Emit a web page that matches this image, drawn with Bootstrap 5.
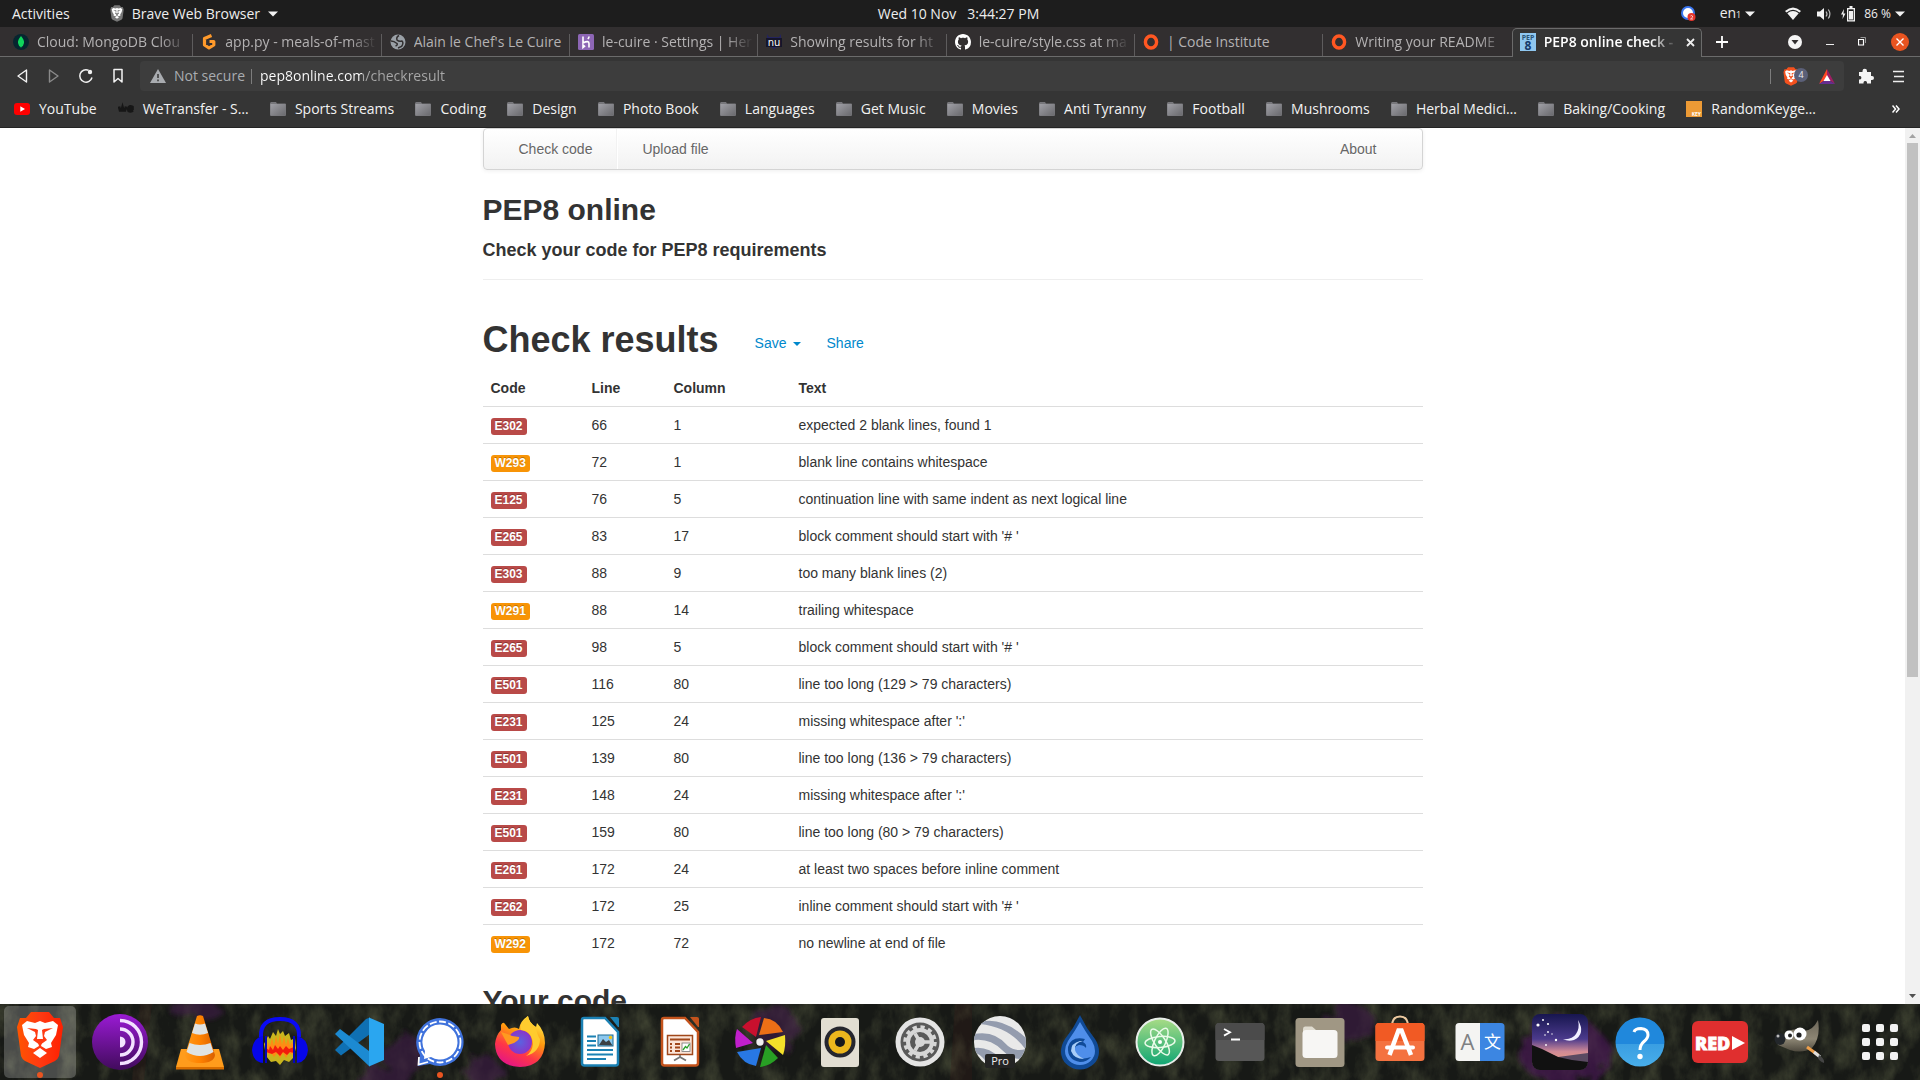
<!DOCTYPE html>
<html lang="en">
<head>
<meta charset="utf-8">
<meta name="viewport" content="width=device-width, initial-scale=1">
<title>PEP8 online check</title>
<link href="https://cdn.jsdelivr.net/npm/bootstrap@5.3.0/dist/css/bootstrap.min.css" rel="stylesheet">
<style>
  body { height: 100vh; overflow: hidden; font-family: "Open Sans", "Noto Sans", sans-serif; font-size: 14px; line-height: 20px; color: #eee; background: #fff; }
  button { border: 0; background: none; color: inherit; padding: 0; display: inline-flex; align-items: center; justify-content: center; }
  svg { display: block; flex: none; }
  .topbar { height: 27px; background: #1d1d1d; padding: 0 15px 0 12px; }
  .topbar-side { flex: 1 1 0; }
  .app-menu { margin-left: 40px; }
  .layout-index { font-size: 9px; }
  .battery-level { font-size: 12px; }
  .tray-state { margin-left: 30px; }

  .tabstrip { height: 30px; background: #322f30; padding-left: 5px; }
  .tab-item { flex: 1 1 0; min-width: 0; height: 30px; gap: 8px; padding: 0 5px 0 8px; justify-content: flex-start; color: #b4b2b3; border-bottom: 1px solid #6b6b6b; position: relative; }
  .tab-item::after { content: ""; position: absolute; right: 0; top: 7px; bottom: 0; width: 1px; background: #5e5c5d; }
  .tab-label { flex: 1 1 0; min-width: 0; overflow: hidden; white-space: nowrap; text-align: left; -webkit-mask-image: linear-gradient(90deg, #000 calc(100% - 28px), transparent); mask-image: linear-gradient(90deg, #000 calc(100% - 28px), transparent); }
  .tab-label.short { -webkit-mask-image: none; mask-image: none; }
  .tab-item.current { margin-top: 1px; height: 29px; background: #353535; color: #fff; border: 1px solid #6b6b6b; border-bottom: 0; border-radius: 5px 5px 0 0; padding: 0 6px 2px 7px; font-weight: 600; }
  .tab-item.current::after, .tab-item.last-idle::after { display: none; }
  .strip-end { width: 218px; gap: 24px; border-bottom: 1px solid #6b6b6b; padding: 0 11px 0 14px; }
  .strip-start { width: 5px; margin-left: -5px; border-bottom: 1px solid #6b6b6b; }

  .toolbar { height: 34px; background: #353535; padding: 4px 16px 0 14px; }
  .nav-tools { width: 126px; gap: 16px; }
  .address { height: 30px; background: #3d3d3d; border-radius: 4px; padding: 0 9px 0 10px; color: #a9acb0; }
  .address label { margin: 0 6px 0 8px; }
  .address input { border: 0; outline: 0; padding: 0; margin-left: 8px; color: transparent; background: linear-gradient(90deg, #fff 102px, #a9a9a9 102px); -webkit-background-clip: text; background-clip: text; }
  .v-rule { width: 1px; height: 15px; background: #7d7d7d; }
  .ext-tools { width: 60px; padding-left: 14px; }
  .shield-count { position: absolute; left: 11px; top: 1px; width: 14px; height: 14px; border-radius: 7px; background: #5b6078; color: #eee; font-size: 9px; line-height: 14px; text-align: center; }

  .bookmarks { height: 37px; background: #353535; padding: 0 20px 1px 14px; border-bottom: 1px solid #242424; }
  .bookmarks a { color: #f2f2f2; text-decoration: none; gap: 9px; white-space: nowrap; }
  .bookmark-list { padding-right: 76px; }

  .page { flex: 1 1 0; font-family: "Liberation Sans", Arial, sans-serif; color: #333; min-height: 0; }
  .page-body { overflow: hidden; height: 100%; }
  .site { max-width: 940px; margin: 0 auto; }
  .site-nav { border: 1px solid #d4d4d4; border-radius: 4px; background: linear-gradient(#fff, #f2f2f2); box-shadow: 0 1px 4px rgba(0,0,0,.065); padding: 0 30px 0 20px; }
  .site-nav a { color: #666; text-decoration: none; padding: 10px 15px; text-shadow: 0 1px 0 #fff; }
  .site-nav-rule { width: 2px; height: 40px; margin: 0 9px; border-left: 1px solid #f2f2f2; border-right: 1px solid #fff; }
  .site h1, .site h2, .site h3 { font-weight: 700; margin: 10px 0; color: #333; }
  .site h1 { font-size: 36px; line-height: 40px; }
  .site h2 { font-size: 30px; line-height: 40px; }
  .site h3 { font-size: 18px; line-height: 20px; }
  .site-head { margin: 20px 0 40px; padding-bottom: 19px; border-bottom: 1px solid #eee; }
  .site-head h2, .site-head h3 { margin: 0 0 10px; }
  .site-head h3 { margin-bottom: 0; }
  .result-links { padding: 13px 0 0 36px; gap: 26px; }
  .result-links a { color: #08c; text-decoration: none; }
  .result-links .dropdown-toggle::after { border-top-width: 4px; border-left-width: 4px; border-right-width: 4px; margin-left: 6px; vertical-align: 2px; }
  .results { --bs-table-color: #333; --bs-table-bg: transparent; margin-bottom: 20px; table-layout: fixed; color: #333; }
  .results > :not(caption) > * > * { padding: 8px; border: 0; line-height: 20px; }
  .results > tbody > tr > td { border-top: 1px solid #ddd; }
  .c-code { width: 101px; } .c-line { width: 82px; } .c-col { width: 125px; }
  .code-tag { display: inline-block; vertical-align: top; margin-top: 3px; font-size: 12px; line-height: 14px; padding: 1px 4px 2px; border-radius: 3px; font-weight: 700; color: #fff; text-shadow: 0 -1px 0 rgba(0,0,0,.25); }
  .tag-e { background: #b94a48; } .tag-w { background: #f89406; }

  .scroller { width: 15px; background: #f1f1f1; }
  .scroll-arrow { height: 15px; width: 15px; }
  .scroll-thumb { width: 11px; height: 61%; background: #c1c1c1; }

  .dock { height: 76px; background: #181a16; position: relative; overflow: hidden; }
  .dock-bg { position: absolute; inset: 0; width: 100%; height: 100%; }
  .dock-app { flex: 1 1 0; height: 76px; position: relative; }
  .dock-app.active::before { content: ""; position: absolute; inset: 2px 4px; border-radius: 5px; background: rgba(255,255,255,.22); }
  .dock-app svg { position: relative; }
  .dock-app.running::after { content: ""; position: absolute; left: calc(50% - 3px); bottom: 2px; width: 6px; height: 6px; border-radius: 3px; background: #e95420; }
  .shield-grey { --shield: #777; }
  .shield-flat { --shield: #f4511e; }
</style>
<script src="https://cdn.jsdelivr.net/npm/bootstrap@5.3.0/dist/js/bootstrap.bundle.min.js"></script>
</head>
<body class="d-flex flex-column">

<svg width="0" height="0" class="position-absolute" aria-hidden="true">
  <defs>
    <linearGradient id="gFolder" x1="0" y1="0" x2="1" y2="1"><stop offset="0" stop-color="#a0a0a6"/><stop offset="1" stop-color="#69696d"/></linearGradient>
    <linearGradient id="gBrave" x1="0" x2="1"><stop offset="0" stop-color="#ff5500"/><stop offset=".5" stop-color="#ff3a12"/><stop offset="1" stop-color="#ff2000"/></linearGradient>
    <linearGradient id="gTor" x1="0" y1="0" x2="0" y2="1"><stop offset="0" stop-color="#9a1bd4"/><stop offset="1" stop-color="#410b5c"/></linearGradient>
    <linearGradient id="gCone" x1="0" x2="1"><stop offset="0" stop-color="#ff9a1a"/><stop offset=".5" stop-color="#ff8200"/><stop offset="1" stop-color="#d95f00"/></linearGradient>
    <linearGradient id="gFox" x1=".8" y1="0" x2=".3" y2="1"><stop offset="0" stop-color="#fff44f"/><stop offset=".4" stop-color="#ff980e"/><stop offset=".7" stop-color="#ff3647"/><stop offset="1" stop-color="#e31587"/></linearGradient>
    <linearGradient id="gAtom" x1="0" y1="0" x2="0" y2="1"><stop offset="0" stop-color="#a9dc86"/><stop offset="1" stop-color="#0fa573"/></linearGradient>
    <linearGradient id="gSky" x1="0" y1="0" x2="0" y2="1"><stop offset="0" stop-color="#17164f"/><stop offset=".5" stop-color="#4b3a8c"/><stop offset=".75" stop-color="#d08a96"/><stop offset="1" stop-color="#f0a080"/></linearGradient>
    <linearGradient id="gHelp" x1="0" y1="0" x2="0" y2="1"><stop offset=".54" stop-color="#2088dc"/><stop offset=".55" stop-color="#3a9ee2"/><stop offset="1" stop-color="#48aeea"/></linearGradient>
    <linearGradient id="gGimp" x1="0" y1="0" x2="0" y2="1"><stop offset="0" stop-color="#6b6558"/><stop offset=".6" stop-color="#8d8674"/><stop offset="1" stop-color="#4e493e"/></linearGradient>
    <radialGradient id="gOrb"><stop offset="0" stop-color="#5a63e0"/><stop offset="1" stop-color="#8a35c8"/></radialGradient>
    <symbol id="folder" viewBox="0 0 16 16"><path d="M0 2.5Q0 1 1.2 1H6L7 2.5H15Q16 2.5 16 3.5V13.5Q16 15 14.8 15H1.2Q0 15 0 13.5Z" fill="#77777b"/><path d="M.5 3H15.5V14.5H.5Z" fill="url(#gFolder)"/></symbol>
    <symbol id="lion" viewBox="6 1 48 58"><path d="M21 2H39L44 8L50 8L53 17L49 46Q48 49 45 51L30 58L15 51Q12 49 11 46L7 17L10 8L16 8Z" fill="var(--shield,url(#gBrave))"/><path d="M12 15L17 11L25 13L30 11L35 13L43 11L48 15L46 25L41 33L42 37L36 39L31 36L33 29H27L29 36L24 39L18 37L19 33L14 25Z" fill="#fff"/><path d="M23 43L30 38L37 43L30 48Z" fill="#fff"/><path d="M17 18L26 19L28 20L27 29L30 31L33 29L32 20L34 19L43 18L35 22L34 26L37 30L30 35L23 30L26 26L25 22Z" fill="var(--shield,#ff3a12)"/></symbol>
    <symbol id="ring" viewBox="0 0 16 16"><ellipse cx="8" cy="8" rx="5.6" ry="6" fill="none" stroke="#ff5722" stroke-width="3.4"/></symbol>
    <symbol id="caret" viewBox="0 0 10 6"><path d="M0 .5H10L5 5.5Z" fill="#f2f2f2"/></symbol>
  </defs>
</svg>

<header class="topbar d-flex align-items-center flex-shrink-0">
  <div class="topbar-side d-flex align-items-center">
    <button type="button">Activities</button>
    <button type="button" class="app-menu"><svg width="14" height="17" class="shield-grey"><use href="#lion"/></svg><span class="ms-2 me-2">Brave Web Browser</span><svg width="10" height="6"><use href="#caret"/></svg></button>
  </div>
  <button type="button">Wed 10 Nov&nbsp;&nbsp; 3:44:27 PM</button>
  <div class="topbar-side d-flex align-items-center justify-content-end">
    <svg width="15" height="16" viewBox="0 0 15 16"><circle cx="7" cy="7" r="6" fill="#fff" stroke="#3a76f0" stroke-width="2"/><circle cx="10.5" cy="11" r="4" fill="#e5352d"/><path d="M9.5 10q1-1 2 0T9.5 13h2.5" fill="none" stroke="#fff" stroke-width=".7"/></svg>
    <button type="button" class="ms-4"><span>en<span class="layout-index">1</span></span><svg width="10" height="6" class="ms-1"><use href="#caret"/></svg></button>
    <button type="button" class="tray-state">
      <svg width="16" height="14" viewBox="0 0 16 14"><path d="M0 4Q8-3 16 4L14.5 5.6Q8 0 1.5 5.6Z" fill="#f2f2f2"/><path d="M2.3 6.3Q8 1.8 13.7 6.3L8 13Z" fill="#f2f2f2"/></svg>
      <svg width="16" height="14" viewBox="0 0 16 14" class="ms-3"><path d="M0 4.500H3L7 1V13L3 9.500H0Z" fill="#f2f2f2"/><path d="M9 4.5Q11 7 9 9.500M11.3 2.500Q14.5 7 11.3 11.500" stroke="#bbb" fill="none" stroke-width="1.2"/></svg>
      <svg width="15" height="16" viewBox="0 0 15 16" class="ms-2 me-2"><path d="M3 3L0 8.5H2L1.5 13L4.500 7.5H2.5Z" fill="#f2f2f2"/><path d="M8.5 0H11.5V2H8.5ZM6 2H14V15.5H6Z" fill="#f2f2f2"/><path d="M7.3 3.3H12.7V14.2H7.3Z" fill="#1d1d1d"/><path d="M8 5H12V13.5H8Z" fill="#f2f2f2"/></svg>
      <span class="battery-level me-1">86 %</span><svg width="10" height="6"><use href="#caret"/></svg>
    </button>
  </div>
</header>

<nav class="tabstrip d-flex flex-shrink-0" aria-label="Browser tabs">
  <div class="strip-start"></div>
  <button type="button" class="tab-item"><svg width="16" height="16" viewBox="0 0 16 16"><circle cx="8" cy="8" r="8" fill="#06262f"/><path d="M8 2Q4.5 6 5 9Q5.5 12 7.7 13L8 14.5L8.3 13Q10.5 12 11 9Q11.5 6 8 2Z" fill="#10d65c"/></svg><span class="tab-label">Cloud: MongoDB Clou</span></button>
  <button type="button" class="tab-item"><svg width="16" height="16" viewBox="0 0 16 16"><path d="M10.500 1.500L3.500 4.500V11L8 14L12.800 11V7.500H8.500" fill="none" stroke="#ff9a2b" stroke-width="3.200" stroke-linejoin="round"/></svg><span class="tab-label">app.py - meals-of-mast</span></button>
  <button type="button" class="tab-item"><svg width="16" height="16" viewBox="0 0 16 16"><circle cx="8" cy="8" r="7.5" fill="#9aa0a6"/><path d="M9 1.5Q6 3 7 6Q9 8 12 7Q14 9 11.5 12.5L8 14M1 7Q4 7 7 9.5Q8 11 5.5 12" fill="none" stroke="#322f30" stroke-width="1.5"/></svg><span class="tab-label short">Alain le Chef's Le Cuire</span></button>
  <button type="button" class="tab-item"><svg width="16" height="16" viewBox="0 0 16 16"><rect width="16" height="16" rx="1.5" fill="#8d66b5"/><path d="M5 2.5V9Q11 6 11 9.5V13.5M5 11V13.5L6.5 12.2ZM11 2.5Q11 4 9.8 5" fill="none" stroke="#fff" stroke-width="1.6"/></svg><span class="tab-label">le-cuire · Settings | Her</span></button>
  <button type="button" class="tab-item"><svg width="16" height="16" viewBox="0 0 16 16"><path d="M1 0L3 3H13L15 0V12L9 14L8 16L7 14L1 12Z" fill="#24245e"/><rect y="4" width="16" height="9" fill="#15152a"/><text x="8" y="11.5" font-size="10" text-anchor="middle" fill="#fff" font-family="DejaVu Sans">nu</text></svg><span class="tab-label">Showing results for ht</span></button>
  <button type="button" class="tab-item"><svg width="16" height="16" viewBox="0 0 16 16"><path fill="#fff" d="M8 0C3.58 0 0 3.58 0 8c0 3.54 2.29 6.53 5.47 7.59.4.07.55-.17.55-.38 0-.19-.01-.82-.01-1.49-2.01.37-2.53-.49-2.69-.94-.09-.23-.48-.94-.82-1.13-.28-.15-.68-.52-.01-.53.63-.01 1.08.58 1.23.82.72 1.21 1.87.87 2.33.66.07-.52.28-.87.51-1.07-1.78-.2-3.64-.89-3.64-3.95 0-.87.31-1.59.82-2.15-.08-.2-.36-1.02.08-2.12 0 0 .67-.21 2.2.82.64-.18 1.32-.27 2-.27s1.36.09 2 .27c1.53-1.04 2.2-.82 2.2-.82.44 1.1.16 1.92.08 2.12.51.56.82 1.27.82 2.15 0 3.07-1.87 3.75-3.65 3.95.29.25.54.73.54 1.48 0 1.07-.01 1.93-.01 2.2 0 .21.15.46.55.38A8 8 0 0 0 16 8c0-4.42-3.58-8-8-8"/></svg><span class="tab-label">le-cuire/style.css at ma</span></button>
  <button type="button" class="tab-item"><svg width="16" height="16"><use href="#ring"/></svg><span class="tab-label short">| Code Institute</span></button>
  <button type="button" class="tab-item last-idle"><svg width="16" height="16"><use href="#ring"/></svg><span class="tab-label">Writing your README</span></button>
  <button type="button" class="tab-item current"><svg width="16" height="18" viewBox="0 0 16 18"><rect width="16" height="18" fill="#8fc7f0"/><text x="8" y="7" font-size="7" font-weight="700" text-anchor="middle" fill="#2b5476">PEP</text><text x="8" y="17" font-size="12" font-weight="700" text-anchor="middle" fill="#163a6b">8</text></svg><span class="tab-label">PEP8 online check -</span><svg width="9" height="9" viewBox="0 0 9 9"><path d="M1 1L8 8M8 1L1 8" stroke="#eee" stroke-width="1.8"/></svg></button>
  <div class="strip-end d-flex align-items-center">
    <button type="button" aria-label="New tab" class="me-auto"><svg width="12" height="12" viewBox="0 0 12 12"><path d="M6 0V12M0 6H12" stroke="#fff" stroke-width="1.8"/></svg></button>
    <button type="button" aria-label="Search tabs"><svg width="14" height="14" viewBox="0 0 14 14"><circle cx="7" cy="7" r="7" fill="#f5f5f5"/><path d="M3.5 5H10.5L7 9.5Z" fill="#322f30"/></svg></button>
    <button type="button" aria-label="Minimise"><svg width="8" height="9" viewBox="0 0 8 9"><path d="M0 7.5H8" stroke="#eee"/></svg></button>
    <button type="button" aria-label="Restore"><svg width="9" height="9" viewBox="0 0 9 9"><path d="M.5 2.5H5.5V8H.5Z" fill="none" stroke="#fff" stroke-width="1.2"/><path d="M2.5 .5H7.5V6" fill="none" stroke="#999"/></svg></button>
    <button type="button" aria-label="Close"><svg width="18" height="18" viewBox="0 0 18 18"><circle cx="9" cy="9" r="9" fill="#e95420"/><path d="M5.5 5.5L12.5 12.5M12.5 5.5L5.5 12.5" stroke="#fff" stroke-width="1.4"/></svg></button>
  </div>
</nav>

<div class="toolbar d-flex align-items-center flex-shrink-0">
  <div class="nav-tools d-flex">
    <button type="button" aria-label="Back"><svg width="16" height="16" viewBox="0 0 16 16"><path d="M12.5 2L4 8L12.5 14Z" fill="none" stroke="#f2f2f2" stroke-width="1.4" stroke-linejoin="round"/></svg></button>
    <button type="button" aria-label="Forward"><svg width="16" height="16" viewBox="0 0 16 16"><path d="M3.5 2L12 8L3.5 14Z" fill="none" stroke="#8a8a8a" stroke-width="1.4" stroke-linejoin="round"/></svg></button>
    <button type="button" aria-label="Reload"><svg width="16" height="16" viewBox="0 0 16 16"><path d="M14 9.500A6.200 6.200 0 1 1 10.500 2.300" fill="none" stroke="#f2f2f2" stroke-width="1.5"/><circle cx="12" cy="4" r="2.200" fill="#f2f2f2"/></svg></button>
    <button type="button" aria-label="Bookmark"><svg width="16" height="16" viewBox="0 0 16 16"><path d="M4 1.5H12V14L8 10.5L4 14Z" fill="none" stroke="#f2f2f2" stroke-width="1.5" stroke-linejoin="round"/></svg></button>
  </div>
  <div class="address d-flex flex-fill align-items-center">
    <svg width="16" height="14" viewBox="0 0 16 14"><path d="M8 0L16 14H0Z" fill="#a9acb0"/><path d="M8 5V9M8 10.5V12.3" stroke="#3d3d3d" stroke-width="1.6"/></svg>
    <label for="url">Not secure</label>
    <span class="v-rule"></span>
    <input id="url" class="flex-fill" type="text" value="pep8online.com/checkresult" spellcheck="false">
    <span class="v-rule"></span>
    <button type="button" class="position-relative mx-2 px-1" aria-label="Brave shields"><svg width="16" height="19" class="shield-flat"><use href="#lion"/></svg><span class="shield-count ms-1">4</span></button>
    <button type="button" class="ms-2" aria-label="Rewards"><svg width="16" height="15" viewBox="0 0 16 15"><path d="M8 0L0 15L8 9.5Z" fill="#ff4724"/><path d="M8 0L16 15L8 9.5Z" fill="#9e1f63"/><path d="M0 15H16L8 10Z" fill="#662d91"/><path d="M8 6L11.5 12H4.5Z" fill="#fff"/></svg></button>
  </div>
  <div class="ext-tools d-flex align-items-center justify-content-between">
    <button type="button" aria-label="Extensions"><svg width="16" height="16" viewBox="0 0 16 16"><path d="M1 4H4.5V3A2.200 2.200 0 0 1 9 3V4H13V8H14A2 2 0 0 1 14 12H13V15.5H9V14.5A1.8 1.8 0 0 0 5.5 14.5V15.5H1V11.5H2A1.8 1.8 0 0 0 2 8H1Z" fill="#f5f5f5"/></svg></button>
    <button type="button" aria-label="Menu"><svg width="11" height="13" viewBox="0 0 11 13"><path d="M0 1.500H11M1 6.500H11M0 11.500H11" stroke="#eee" stroke-width="1.6"/></svg></button>
  </div>
</div>

<nav class="bookmarks d-flex align-items-center flex-shrink-0" aria-label="Bookmarks">
  <div class="bookmark-list d-flex flex-fill justify-content-between">
    <a href="#" class="d-flex align-items-center"><svg width="16" height="16" viewBox="0 0 16 16"><rect y="2" width="16" height="12" rx="3" fill="#f00"/><path d="M6.3 5.3L11 8L6.3 10.7Z" fill="#fff"/></svg>YouTube</a>
    <a href="#" class="d-flex align-items-center"><svg width="16" height="16" viewBox="0 0 16 16"><path d="M1 5.500L2 9.500H3.500L4.500 6L5.500 9.500H7L8 5.500M15 9.500Q10.500 12 10 8Q11 4 14.500 6V8H10.500" fill="none" stroke="#161616" stroke-width="2.600"/></svg>WeTransfer - S…</a>
    <a href="#" class="d-flex align-items-center"><svg width="16" height="16"><use href="#folder"/></svg>Sports Streams</a>
    <a href="#" class="d-flex align-items-center"><svg width="16" height="16"><use href="#folder"/></svg>Coding</a>
    <a href="#" class="d-flex align-items-center"><svg width="16" height="16"><use href="#folder"/></svg>Design</a>
    <a href="#" class="d-flex align-items-center"><svg width="16" height="16"><use href="#folder"/></svg>Photo Book</a>
    <a href="#" class="d-flex align-items-center"><svg width="16" height="16"><use href="#folder"/></svg>Languages</a>
    <a href="#" class="d-flex align-items-center"><svg width="16" height="16"><use href="#folder"/></svg>Get Music</a>
    <a href="#" class="d-flex align-items-center"><svg width="16" height="16"><use href="#folder"/></svg>Movies</a>
    <a href="#" class="d-flex align-items-center"><svg width="16" height="16"><use href="#folder"/></svg>Anti Tyranny</a>
    <a href="#" class="d-flex align-items-center"><svg width="16" height="16"><use href="#folder"/></svg>Football</a>
    <a href="#" class="d-flex align-items-center"><svg width="16" height="16"><use href="#folder"/></svg>Mushrooms</a>
    <a href="#" class="d-flex align-items-center"><svg width="16" height="16"><use href="#folder"/></svg>Herbal Medici…</a>
    <a href="#" class="d-flex align-items-center"><svg width="16" height="16"><use href="#folder"/></svg>Baking/Cooking</a>
    <a href="#" class="d-flex align-items-center"><svg width="16" height="16" viewBox="0 0 16 16"><rect width="16" height="16" fill="#ec9a35"/><text x="15" y="14.5" font-size="5" font-weight="700" text-anchor="end" fill="#fff">KEY</text></svg>RandomKeyge…</a>
  </div>
  <button type="button" aria-label="More bookmarks"><svg width="8" height="8" viewBox="0 0 8 8"><path d="M.5 .5L3.5 4L.5 7.5M4 .5L7 4L4 7.5" fill="none" stroke="#fff" stroke-width="1.5"/></svg></button>
</nav>

<main class="page d-flex">
  <div class="page-body flex-fill">
    <div class="site">
      <nav class="site-nav d-flex align-items-center" aria-label="Site">
        <a href="#">Check code</a><span class="site-nav-rule"></span><a href="#">Upload file</a><a href="#" class="ms-auto">About</a>
      </nav>
      <div class="site-head">
        <h2>PEP8 online</h2>
        <h3>Check your code for PEP8 requirements</h3>
      </div>
      <div class="d-flex">
        <h1 class="mt-0">Check results</h1>
        <div class="result-links d-flex"><a href="#" class="dropdown-toggle">Save</a><a href="#">Share</a></div>
      </div>
      <table class="table results">
        <thead><tr><th class="c-code">Code</th><th class="c-line">Line</th><th class="c-col">Column</th><th>Text</th></tr></thead>
        <tbody>
          <tr><td><span class="code-tag tag-e">E302</span></td><td>66</td><td>1</td><td>expected 2 blank lines, found 1</td></tr>
          <tr><td><span class="code-tag tag-w">W293</span></td><td>72</td><td>1</td><td>blank line contains whitespace</td></tr>
          <tr><td><span class="code-tag tag-e">E125</span></td><td>76</td><td>5</td><td>continuation line with same indent as next logical line</td></tr>
          <tr><td><span class="code-tag tag-e">E265</span></td><td>83</td><td>17</td><td>block comment should start with '# '</td></tr>
          <tr><td><span class="code-tag tag-e">E303</span></td><td>88</td><td>9</td><td>too many blank lines (2)</td></tr>
          <tr><td><span class="code-tag tag-w">W291</span></td><td>88</td><td>14</td><td>trailing whitespace</td></tr>
          <tr><td><span class="code-tag tag-e">E265</span></td><td>98</td><td>5</td><td>block comment should start with '# '</td></tr>
          <tr><td><span class="code-tag tag-e">E501</span></td><td>116</td><td>80</td><td>line too long (129 &gt; 79 characters)</td></tr>
          <tr><td><span class="code-tag tag-e">E231</span></td><td>125</td><td>24</td><td>missing whitespace after ':'</td></tr>
          <tr><td><span class="code-tag tag-e">E501</span></td><td>139</td><td>80</td><td>line too long (136 &gt; 79 characters)</td></tr>
          <tr><td><span class="code-tag tag-e">E231</span></td><td>148</td><td>24</td><td>missing whitespace after ':'</td></tr>
          <tr><td><span class="code-tag tag-e">E501</span></td><td>159</td><td>80</td><td>line too long (80 &gt; 79 characters)</td></tr>
          <tr><td><span class="code-tag tag-e">E261</span></td><td>172</td><td>24</td><td>at least two spaces before inline comment</td></tr>
          <tr><td><span class="code-tag tag-e">E262</span></td><td>172</td><td>25</td><td>inline comment should start with '# '</td></tr>
          <tr><td><span class="code-tag tag-w">W292</span></td><td>172</td><td>72</td><td>no newline at end of file</td></tr>
        </tbody>
      </table>
      <h2>Your code</h2>
    </div>
  </div>
  <div class="scroller d-flex flex-column align-items-center">
    <svg class="scroll-arrow" viewBox="0 0 15 15"><path d="M4 10L7.5 6L11 10Z" fill="#a3a3a3"/></svg>
    <div class="scroll-thumb"></div>
    <svg class="scroll-arrow mt-auto" viewBox="0 0 15 15"><path d="M4 5L7.5 9L11 5Z" fill="#505050"/></svg>
  </div>
</main>

<footer class="dock d-flex flex-shrink-0">
  <svg class="dock-bg" viewBox="0 0 1920 76" preserveAspectRatio="none" aria-hidden="true">
    <defs>
      <filter id="fGrass" x="0" y="0" width="100%" height="100%"><feTurbulence type="fractalNoise" baseFrequency=".05 .03" numOctaves="5" seed="4"/><feColorMatrix values="0 0 0 0 .19  0 0 0 0 .21  0 0 0 0 .1  1.6 0 0 0 -.62"/></filter>
      <filter id="fSoft"><feTurbulence type="fractalNoise" baseFrequency=".06" numOctaves="3" seed="9" result="n"/><feDisplacementMap in="SourceGraphic" in2="n" scale="24"/><feGaussianBlur stdDeviation="2"/></filter>
    </defs>
    <rect width="1920" height="76" fill="#171916"/>
    <rect width="1920" height="76" filter="url(#fGrass)" opacity=".5"/>
    <g filter="url(#fSoft)" fill="#3c1a44" opacity=".65">
      <ellipse cx="195" cy="6" rx="26" ry="9"/><ellipse cx="405" cy="50" rx="24" ry="18"/><ellipse cx="385" cy="74" rx="28" ry="10"/><ellipse cx="484" cy="68" rx="18" ry="15"/><ellipse cx="775" cy="22" rx="22" ry="22"/><ellipse cx="1350" cy="18" rx="22" ry="20"/><ellipse cx="1564" cy="48" rx="44" ry="34" fill="#4a1256"/>
    </g>
    <g fill="#3a1a18" opacity=".25"><path d="M955 0H972V76H950Z"/><path d="M140 0H152L144 76H132Z"/></g>
  </svg>

  <button type="button" class="dock-app active running" aria-label="Brave"><svg width="48" height="58" class="mb-1"><use href="#lion"/></svg></button>

  <button type="button" class="dock-app" aria-label="Tor Browser"><svg width="60" height="60" viewBox="0 0 60 60"><circle cx="30" cy="30" r="28" fill="url(#gTor)"/><path d="M30 24.5A5.5 5.5 0 0 1 30 35.5Z" fill="#f3e2ff"/><path d="M30 17A13 13 0 0 1 30 43M30 8.5A21.5 21.5 0 0 1 30 51.5" fill="none" stroke="#f3e2ff" stroke-width="3.4"/></svg></button>

  <button type="button" class="dock-app" aria-label="VLC"><svg width="60" height="60" viewBox="0 0 60 60"><path d="M11 37H49L54 55V57H6V55Z" fill="#ff9c1c"/><path d="M6 55H54V57.5H6Z" fill="#d96f00"/><path d="M27 4Q30 2.5 33 4L45 43Q44 51 30 51Q16 51 15 43Z" fill="url(#gCone)"/><path d="M25 11.5Q30 13.5 35 11.5L38 21Q30 24.5 22 21ZM19.5 31Q30 35 40.5 31L43.5 40Q30 48 16.5 40Z" fill="#dfe3e4"/></svg></button>

  <button type="button" class="dock-app" aria-label="Audacity"><svg width="60" height="60" viewBox="0 0 60 60"><path d="M16 44L14 32L18 24L20 27L23 20L26 24L28 17L30 22L33 19L35 24L39 21L41 28L45 26L46 36L43 46L39 50L34 48L30 53L26 49L21 50Z" fill="#c9b51e"/><path d="M17 38L18 30L20 34L22 26L24 34L26 24L28 32L30 22L32 33L34 24L36 33L38 26L40 34L42 29L44 38L42 43L39 40L36 46L33 41L30 46L27 41L24 45L21 41L19 43Z" fill="#ff8b14"/><path d="M16 36L19 38L20 34L23 38L25 33L28 37L30 34L33 38L36 34L39 37L44 35V41L40 40L37 43L33 40L30 44L26 40L22 42L16 40Z" fill="#f21c0c"/><path d="M11 25Q10 7 30 7Q50 7 49 25" fill="none" stroke="#0a0af5" stroke-width="4"/><path d="M13 24V51Q3 50 2 38Q3 26 13 24ZM47 24V51Q57 50 58 38Q57 26 47 24Z" fill="#0606e8"/><path d="M16 24V51M44 24V51" stroke="#0606b8" stroke-width="2"/></svg></button>

  <button type="button" class="dock-app" aria-label="Visual Studio Code"><svg width="60" height="60" viewBox="0 0 60 60"><path d="M5 38L36 7L40 5.500V22L11 43.500Z" fill="#0f70b3"/><path d="M10 17L39 39V54L5 22Z" fill="#1c8ad2"/><path d="M39 5.5L54 12V48L39 54.500Z" fill="#2aa6f0"/></svg></button>

  <button type="button" class="dock-app running" aria-label="Signal"><svg width="60" height="60" viewBox="0 0 60 60"><path d="M30 6A24 24 0 1 1 20 52L8 54L10 43A24 24 0 0 1 30 6Z" fill="#3f72dc"/><circle cx="30" cy="30" r="20.5" fill="none" stroke="#fff" stroke-width="1.8" stroke-dasharray="7 2.5"/><path d="M9 45L8.5 52.5L18 50" fill="none" stroke="#fff" stroke-width="1.8"/><path d="M30 12.500A17.500 17.500 0 1 1 21 45L14 47L15 39A17.500 17.500 0 0 1 30 12.500Z" fill="#fff"/></svg></button>

  <button type="button" class="dock-app" aria-label="Firefox"><svg width="60" height="60" viewBox="0 0 60 60"><path d="M11 13Q13 9 15 12L19 17Q25 14 29 17Q30 9 38 4Q39 11 46 15L47 11Q55 19 55 31Q54 54 30 55Q6 54 5 32Q6 23 11 18Z" fill="url(#gFox)"/><circle cx="30" cy="30" r="12" fill="url(#gOrb)"/><path d="M38 4Q28 13 31 18Q42 19 43 32Q42 40 36 44Q50 40 50 27Q47 23 46 15Q39 11 38 4Z" fill="#ffcb2e"/><path d="M11 20Q18 22 22 24L29 25Q30 28 24 31L18 33Q14 26 11 20Z" fill="#ff9a20"/></svg></button>

  <button type="button" class="dock-app" aria-label="LibreOffice Writer"><svg width="60" height="60" viewBox="0 0 60 60"><path d="M14 6H35L48 20V51Q48 53.5 45.5 53.5H14.5Q12 53.5 12 51V8Q12 6 14 6Z" fill="#fff" stroke="#1b81b4" stroke-width="2.5"/><path d="M40 5H47Q49 5 49 7V15H48Z" fill="#1b81b4"/><path d="M17 24.5H26M17 29H26M17 33.5H26M17 38H43M17 42.5H43M17 47H36" stroke="#1b81b4" stroke-width="1.8"/><rect x="28" y="23" width="15" height="11" fill="#8cc8ef" stroke="#1b6a94"/><path d="M29 33L33 27L36 30L39 28L42.5 33.5Z" fill="#3b4044"/><circle cx="40.5" cy="25.5" r="1.7" fill="#f5c211"/></svg></button>

  <button type="button" class="dock-app" aria-label="LibreOffice Impress"><svg width="60" height="60" viewBox="0 0 60 60"><path d="M14 6H35L48 20V51Q48 53.5 45.5 53.5H14.5Q12 53.5 12 51V8Q12 6 14 6Z" fill="#fff" stroke="#c4531c" stroke-width="2.5"/><path d="M40 5H47Q49 5 49 7V15H48Z" fill="#c4531c"/><rect x="17.500" y="23.5" width="25" height="19" fill="#fbe5d8" stroke="#a0471b" stroke-width="1.5"/><path d="M20 27.5H40M20 32H22M20 35.5H22M20 39H22M25 32H30M25 35.5H30M25 39H30" stroke="#a0471b" stroke-width="2"/><rect x="32" y="31" width="8" height="8.5" fill="#fff" stroke="#777" stroke-width=".8"/><path d="M33 38L35.5 34.5L37 36L39.5 32" stroke="#2aa02a" fill="none" stroke-width="1.3"/><path d="M30 43V45L24 48.5M30 45L36 48.5" stroke="#777" stroke-width="1.8" fill="none"/></svg></button>

  <button type="button" class="dock-app" aria-label="Darktable"><svg width="60" height="60" viewBox="0 0 60 60"><path d="M12 15Q20 6 31 5L26 25Z" fill="#c8102e"/><path d="M34 6Q47 7 53 20L29 23Z" fill="#ec6f16"/><path d="M55 23Q56 35 53 43L36 29Z" fill="#f4e02a"/><path d="M48 46Q40 54 30 55L36 33Z" fill="#28a024"/><path d="M26 54Q13 52 7 40L31 36Z" fill="#2878e4"/><path d="M6 36Q4 25 7 17L23 31Z" fill="#c01fcb"/><circle cx="30" cy="30" r="3.7" fill="#eee"/></svg></button>

  <button type="button" class="dock-app" aria-label="Rhythmbox"><svg width="60" height="60" viewBox="0 0 60 60"><rect x="11" y="6" width="38" height="49" rx="3" fill="#e2ded2"/><circle cx="30" cy="30" r="15.5" fill="#25262e"/><circle cx="30" cy="30" r="11.5" fill="#edb71d"/><circle cx="30" cy="30" r="5" fill="#17181c"/></svg></button>

  <button type="button" class="dock-app" aria-label="Settings"><svg width="60" height="60" viewBox="0 0 60 60"><circle cx="30" cy="30" r="24.5" fill="#e4e4e4"/><circle cx="30" cy="30" r="19.5" fill="#595959"/><circle cx="30" cy="30" r="15" fill="none" stroke="#d6d6d6" stroke-width="3.5" stroke-dasharray="4.2 3.654"/><circle cx="30" cy="30" r="12" fill="none" stroke="#d6d6d6" stroke-width="4"/><path d="M30 30L40 30M30 30L25 21.5M30 30L25 38.5" stroke="#d6d6d6" stroke-width="3.5"/><circle cx="30" cy="30" r="5" fill="#d6d6d6"/></svg></button>

  <button type="button" class="dock-app" aria-label="Google Earth Pro"><svg width="60" height="60" viewBox="0 0 60 60"><clipPath id="cEarth"><circle cx="30" cy="30" r="26"/></clipPath><g clip-path="url(#cEarth)"><rect width="60" height="60" fill="#e9e9e9"/><path d="M10 10Q32 4 56 26V38Q40 15 10 12ZM4 22Q25 18 38 34Q45 40 56 37V46Q44 50 32 38Q20 26 4 28ZM4 36Q18 34 30 46L34 56H20Q14 44 4 40Z" fill="#949cae"/></g><rect x="15" y="42" width="30" height="14" rx="2" fill="#242424"/><text x="30" y="53" font-size="11" text-anchor="middle" fill="#eee">Pro</text></svg></button>

  <button type="button" class="dock-app" aria-label="Deluge"><svg width="60" height="60" viewBox="0 0 60 60"><path d="M30 3Q36 16 45 27Q49 33 49 40A19 17.5 0 0 1 11 40Q11 33 15 27Q24 16 30 3Z" fill="#104a96"/><path d="M30 10Q35 19 42 29Q45 34 45 39A15 14 0 0 1 15 39Q15 34 18 29Q25 19 30 10Z" fill="#4f8eea"/><path d="M35 27Q21 24 18 35Q17 48 30 50Q37 50 41 45Q30 49 25 42Q22 35 29 33Q34 33 36 36Q37 32 33 30Z" fill="#0f4a98"/><path d="M30 29Q21 31 21 39Q24 47 34 47Q26 43 25 38Q24 31 33 29Z" fill="#a8cdf8"/></svg></button>

  <button type="button" class="dock-app" aria-label="Atom"><svg width="60" height="60" viewBox="0 0 60 60"><circle cx="30" cy="30" r="23.5" fill="url(#gAtom)" stroke="#e8ede9" stroke-width="2"/><g fill="none" stroke="#eafbe9" stroke-width="1.5"><ellipse cx="30" cy="30" rx="15" ry="5.5" transform="rotate(-5 30 30)"/><ellipse cx="30" cy="30" rx="15" ry="5.5" transform="rotate(57 30 30)"/><ellipse cx="30" cy="30" rx="15" ry="5.5" transform="rotate(115 30 30)"/></g><circle cx="30" cy="30" r="2" fill="#fff"/></svg></button>

  <button type="button" class="dock-app" aria-label="Terminal"><svg width="60" height="60" viewBox="0 0 60 60"><rect x="5.5" y="11" width="49" height="38" rx="3.5" fill="#575757"/><path d="M5.5 28V14.500Q5.5 11 9 11H51Q54.5 11 54.5 14.5V28Z" fill="#4b4b4b"/><path d="M14 17L20 20.3L14 23.6M21 27.5H30" fill="none" stroke="#fff" stroke-width="1.8"/></svg></button>

  <button type="button" class="dock-app" aria-label="Files"><svg width="60" height="60" viewBox="0 0 60 60"><rect x="5.5" y="6" width="49" height="49" rx="3.5" fill="#a09784"/><path d="M13 17Q13 14.5 15 14.5H22L26 18H44V30H13Z" fill="#e0dcd0"/><rect x="12.5" y="18" width="35" height="28" rx="3.5" fill="#f7f6f4"/></svg></button>

  <button type="button" class="dock-app" aria-label="Ubuntu Software"><svg width="60" height="60" viewBox="0 0 60 60"><path d="M22 14Q22 4.5 30 4.5Q38 4.5 38 14" fill="none" stroke="#edc9a0" stroke-width="2"/><rect x="5.5" y="11" width="49" height="38" rx="3.5" fill="#f47240"/><path d="M5.5 29V14.5Q5.5 11 9 11H51Q54.5 11 54.5 14.5V29Z" fill="#f15a24"/><path d="M19.5 43L28.5 18.5H31.5L41 43" fill="none" stroke="#fff" stroke-width="4.5"/><path d="M17 35.500H43" stroke="#fff" stroke-width="4" stroke-linecap="round"/></svg></button>

  <button type="button" class="dock-app" aria-label="Translate"><svg width="60" height="60" viewBox="0 0 60 60"><path d="M30 11H9Q5.5 11 5.5 14.5V45.5Q5.5 49 9 49H30Z" fill="#f4f4f2"/><path d="M30 11H51Q54.5 11 54.5 14.5V45.5Q54.5 49 51 49H30Z" fill="#3c86e2"/><text x="17.5" y="38" font-size="22" text-anchor="middle" fill="#7f8183">A</text><text x="42.5" y="36" font-size="17" text-anchor="middle" fill="#fff" font-family="Noto Sans CJK SC, sans-serif">文</text></svg></button>

  <button type="button" class="dock-app" aria-label="Stellarium"><svg width="60" height="60" viewBox="0 0 60 60" class="mb-1"><clipPath id="cSky"><rect x="2" y="4" width="56" height="56" rx="8"/></clipPath><g clip-path="url(#cSky)"><rect x="2" y="4" width="56" height="50" fill="url(#gSky)"/><path d="M2 36L28 47L58 43V60H2Z" fill="#5a4a62"/><path d="M2 35L12 39L28 47L42 50L58 52V60H2Z" fill="#111"/></g><path d="M48 10Q56 24 44 30Q38 32 33 29Q42 30 46 24Q50 18 48 10Z" fill="#f1efff"/><g fill="#fff"><circle cx="8" cy="15" r="1.6"/><circle cx="13" cy="10" r="1"/><circle cx="18" cy="14" r="1.1"/><circle cx="15" cy="25" r=".8"/><circle cx="18" cy="22" r=".9"/><circle cx="22" cy="24" r=".7"/><circle cx="26" cy="30" r="1.2"/><circle cx="16" cy="35" r=".9"/></g></svg></button>

  <button type="button" class="dock-app" aria-label="Help"><svg width="60" height="60" viewBox="0 0 60 60"><circle cx="30" cy="30" r="24.5" fill="url(#gHelp)"/><path d="M24 20Q25 16.5 31 16.5Q38 17 38 23Q38 26 34 29.5Q30 33 30 38" fill="none" stroke="#fff" stroke-width="3"/><circle cx="30" cy="44.5" r="2.7" fill="#fff"/></svg></button>

  <button type="button" class="dock-app" aria-label="Red"><svg width="60" height="60" viewBox="0 0 60 60"><rect x="2" y="9" width="56" height="42" rx="6" fill="#e02f2f"/><text x="5" y="37.5" font-size="18" font-weight="800" fill="#fff" stroke="#fff" stroke-width=".8">RED</text><path d="M42 24L55 31L42 38Z" fill="#fff"/></svg></button>

  <button type="button" class="dock-app" aria-label="GIMP"><svg width="60" height="60" viewBox="0 0 60 60"><path d="M15 22Q22 15 32 19Q42 20 48 8Q51 26 42 36Q32 42 20 38L8 33Q4 24 15 24Z" fill="url(#gGimp)"/><ellipse cx="10" cy="27" rx="5.5" ry="6" fill="#23272b"/><circle cx="8" cy="24" r="1.5" fill="#bbb"/><circle cx="19" cy="23" r="4.5" fill="#fff"/><circle cx="20" cy="23.5" r="2" fill="#222"/><circle cx="30" cy="22" r="6.5" fill="#fff"/><circle cx="29" cy="23" r="2.6" fill="#222"/><path d="M37 35L48 43" stroke="#ee9f4b" stroke-width="3"/><path d="M44 40L50 45" stroke="#ddd" stroke-width="3"/><path d="M49 43Q55 47 54 51Q49 49 48 46Z" fill="#444"/></svg></button>

  <button type="button" class="dock-app" aria-label="Show applications"><svg width="60" height="60" viewBox="0 0 60 60"><g fill="#f2f2f2"><rect x="12" y="12" width="8" height="8" rx="2"/><rect x="26" y="12" width="8" height="8" rx="2"/><rect x="40" y="12" width="8" height="8" rx="2"/><rect x="12" y="26" width="8" height="8" rx="2"/><rect x="26" y="26" width="8" height="8" rx="2"/><rect x="40" y="26" width="8" height="8" rx="2"/><rect x="12" y="40" width="8" height="8" rx="2"/><rect x="26" y="40" width="8" height="8" rx="2"/><rect x="40" y="40" width="8" height="8" rx="2"/></g></svg></button>
</footer>
</body>
</html>
